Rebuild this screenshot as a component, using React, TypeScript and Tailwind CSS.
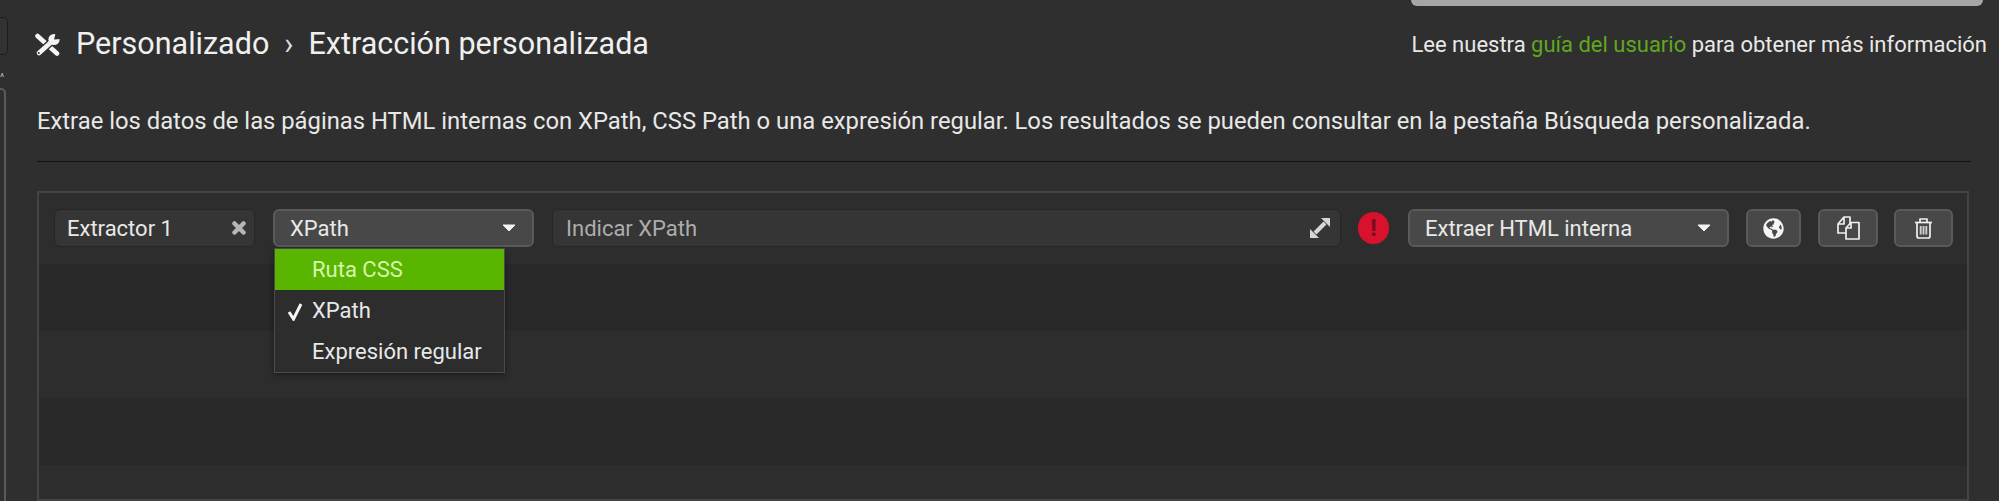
import React from "react";
import { FaGlobeAmericas } from "react-icons/fa";

const Caret = () => (
  <svg width="14" height="8" viewBox="0 0 14 8" className="shrink-0">
    <path d="M1 1 H13 L7 7 Z" fill="#f2f2f2" stroke="#f2f2f2" strokeLinejoin="round" />
  </svg>
);

const ToolsIcon = () => (
  <svg width="27" height="24" viewBox="0 0 27 24" className="shrink-0">
    <path d="M3.5 3 L23 20.5" stroke="#f4f4f4" strokeWidth="4.6" strokeLinecap="round" />
    <path d="M5 20 L19 7.5" stroke="#2f2f2f" strokeWidth="7.4" strokeLinecap="round" />
    <path d="M5 20 L19 7.5" stroke="#f4f4f4" strokeWidth="4.6" strokeLinecap="round" />
    <circle cx="20" cy="6.5" r="5.6" fill="#f4f4f4" />
    <path d="M20 6.5 L22 -1 L28 1 L27 6 Z" fill="#2f2f2f" />
    <circle cx="4.8" cy="20" r="1" fill="#2f2f2f" />
  </svg>
);

const ExpandIcon = () => (
  <svg width="22" height="22" viewBox="0 0 22 22" className="shrink-0">
    <path d="M6 16 L16 6" stroke="#d6d6d6" strokeWidth="4" />
    <path d="M12 1 H21 V10 Z" fill="#d6d6d6" />
    <path d="M1 12 V21 H10 Z" fill="#d6d6d6" />
  </svg>
);

const CopyIcon = () => (
  <svg width="23" height="24" viewBox="0 0 23 24" fill="#484848" stroke="#f0f0f0" strokeWidth="1.7" strokeLinejoin="round">
    <path d="M1 8 L7 1 H13 V17 H1 Z" />
    <path d="M1 8 H7 V1" fill="none" />
    <path d="M9 12 L14 6.5 H22 V23 H9 Z" />
    <path d="M9 12 H14 V6.5" fill="none" />
  </svg>
);

const TrashIcon = () => (
  <svg width="19" height="21" viewBox="0 0 19 21" fill="none" stroke="#f0f0f0" strokeWidth="1.7" strokeLinejoin="round">
    <path d="M1 4.5 H18" />
    <path d="M6 4.5 V1 H13 V4.5" />
    <path d="M3 4.5 V18 Q3 20 5 20 H14 Q16 20 16 18 V4.5" />
    <path d="M6.7 8 V16.5 M9.5 8 V16.5 M12.3 8 V16.5" strokeWidth="1.9" stroke="#cfcfcf" />
  </svg>
);

const Row = ({ dark }: { dark: boolean }) => (
  <div className={`h-[67px] shrink-0 ${dark ? "bg-[#292929]" : "bg-[#2d2d2d]"}`} />
);

const ToolButton = ({ w, children }: { w: string; children: React.ReactNode }) => (
  <button className={`${w} h-[38px] shrink-0 flex items-center justify-center rounded-[6px] border-2 border-[#5a5a5a] bg-[#484848]`}>
    {children}
  </button>
);

export default function App() {
  return (
    <div className="relative w-[1999px] h-[501px] overflow-hidden bg-[#2f2f2f] text-[#e8e8e8] flex font-['Roboto',sans-serif]">
      <div className="absolute top-0 left-[1411px] w-[572px] h-[6px] bg-[#a6a6a6] rounded-b-[10px]" />

      <div className="w-[37px] shrink-0 relative">
        <div className="absolute left-[-8px] top-[17px] w-[16px] h-[38px] rounded-[5px] border border-[#1d1d1d] bg-[#333333]" />
        <div className="absolute left-[-8px] top-[88px] w-[14px] h-[420px] rounded-[5px] border-2 border-[#5a5a5a]" />
        <div className="absolute left-0 top-[73px] text-[10px] leading-none text-[#bbbbbb]">^</div>
      </div>

      <div className="w-[1934px] shrink-0 flex flex-col">
        <header className="h-[88px] shrink-0 flex items-center justify-between -ml-[3px] -mr-[16px] pt-[1px]">
          <div className="flex items-center">
            <ToolsIcon />
            <span className="ml-[15px] text-[30.5px] text-[#f0f0f0] leading-none">Personalizado</span>
            <span className="ml-[15px] text-[30.5px] text-[#dcdcdc] leading-none">›</span>
            <span className="ml-[15px] text-[30.5px] text-[#f0f0f0] leading-none">Extracción personalizada</span>
          </div>
          <div className="text-[22px] leading-none">
            Lee nuestra <span className="text-[#5fa81f]">guía del usuario</span> para obtener más información
          </div>
        </header>

        <p className="h-[76px] shrink-0 border-b border-[#121212] text-[23.8px] leading-[70px] -mt-[2px] text-[#e8e8e8] whitespace-nowrap">
          Extrae los datos de las páginas HTML internas con XPath, CSS Path o una expresión regular. Los resultados se pueden consultar en la pestaña Búsqueda personalizada.
        </p>

        <div className="mt-[29px] h-[310px] shrink-0 w-[1932px] border-2 border-[#444444] bg-[#2d2d2d] flex flex-col overflow-visible">
          <div className="relative h-[71px] shrink-0 bg-[#2d2d2d] flex items-start pl-[15px] pt-[16px] text-[22px]">
            <div className="w-[201px] h-[38px] shrink-0 flex items-center justify-between pl-[12px] pr-[8px] rounded-[6px] bg-[#353535] border border-[#262626]">
              <span>Extractor 1</span>
              <svg width="14" height="14" viewBox="0 0 14 14">
                <path d="M2.5 2.5 L11.5 11.5 M11.5 2.5 L2.5 11.5" stroke="#b5b5b5" strokeWidth="4.5" strokeLinecap="round" />
              </svg>
            </div>
            <div className="relative ml-[18px] w-[261px] shrink-0">
              <div className="h-[38px] flex items-center justify-between pl-[15px] pr-[16px] rounded-[6px] bg-[#484848] border-2 border-[#5a5a5a]">
                <span>XPath</span>
                <Caret />
              </div>
              <div className="absolute left-px top-[39px] z-10 w-[231px] border border-[#4a4a4a] bg-[#2d2d2d] shadow-[0_2px_6px_rgba(0,0,0,0.4)]">
                <div className="h-[41px] flex items-center pl-[37px] bg-[#5ab500] text-[#d6f5b0]">Ruta CSS</div>
                <div className="h-[41px] relative flex items-center pl-[37px]">
                  <svg className="absolute left-[12px] top-[12px]" width="16" height="19" viewBox="0 0 16 19">
                    <path d="M2 10 L6.5 17 L14 2" fill="none" stroke="#f5f5f5" strokeWidth="3" />
                  </svg>
                  XPath
                </div>
                <div className="h-[41px] flex items-center pl-[37px]">Expresión regular</div>
              </div>
            </div>
            <div className="ml-[18px] w-[789px] h-[38px] shrink-0 flex items-center justify-between pl-[13px] pr-[9px] rounded-[6px] bg-[#353535] border border-[#262626]">
              <span className="text-[#adadad]">Indicar XPath</span>
              <ExpandIcon />
            </div>
            <div className="ml-[17px] mt-[3px] w-[31px] h-[32px] shrink-0 rounded-full bg-[#d8112c] flex items-center justify-center text-[#7a0a1c] font-bold text-[24px] leading-none">!</div>
            <div className="ml-[19px] w-[321px] h-[38px] shrink-0 flex items-center justify-between pl-[15px] pr-[16px] rounded-[6px] bg-[#484848] border-2 border-[#5a5a5a]">
              <span>Extraer HTML interna</span>
              <Caret />
            </div>
            <div className="ml-[17px]">
              <ToolButton w="w-[55px]"><FaGlobeAmericas className="text-[21px] text-[#f5f5f5]" /></ToolButton>
            </div>
            <div className="ml-[17px]">
              <ToolButton w="w-[60px]"><CopyIcon /></ToolButton>
            </div>
            <div className="ml-[16px]">
              <ToolButton w="w-[59px]"><TrashIcon /></ToolButton>
            </div>
          </div>
          <Row dark={true} />
          <Row dark={false} />
          <Row dark={true} />
        </div>
      </div>
    </div>
  );
}
